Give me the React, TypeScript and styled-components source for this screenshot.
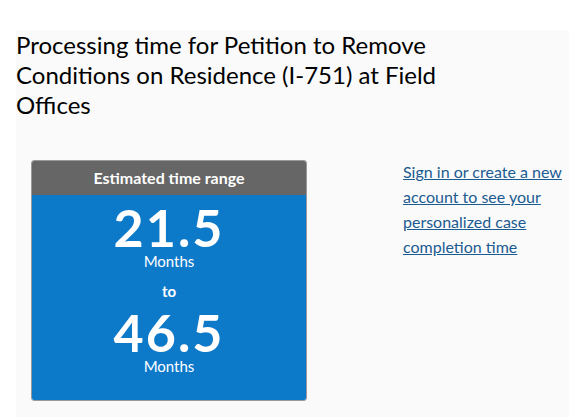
import styled, { createGlobalStyle } from "styled-components";

const GlobalStyle = createGlobalStyle`
  body {
    margin: 0;
    background: #fff;
    font-family: "Lato", "Liberation Sans", sans-serif;
  }
`;

export default function App(): JSX.Element {
    return (
        <>
            <GlobalStyle />
            <Panel>
                <Title>Processing time for Petition to Remove Conditions on Residence (I-751) at Field Offices</Title>
                <Row>
                    <Card>
                        <CardHeader>Estimated time range</CardHeader>
                        <CardBody>
                            <Big>21.5</Big>
                            <Unit>Months</Unit>
                            <To>to</To>
                            <Big $gap={10}>46.5</Big>
                            <Unit>Months</Unit>
                        </CardBody>
                    </Card>
                    <SignIn href="#">Sign in or create a new account to see your personalized case completion time</SignIn>
                </Row>
            </Panel>
        </>
    );
}

const Panel = styled.section`
  margin: 30px 0 0 16px;
  background: #fafafa;
  min-height: 387px;
`;

const Title = styled.h1`
  margin: 0;
  width: 470px;
  font-size: 24px;
  line-height: 30px;
  font-weight: 400;
  color: #000;
`;

const Row = styled.div`
  display: flex;
  align-items: flex-start;
  gap: 96px;
  padding: 40px 0 0 15px;
`;

const Card = styled.div`
  width: 274px;
  border: 1px solid #999;
  border-radius: 3px;
  overflow: hidden;
  flex-shrink: 0;
`;

const CardHeader = styled.div`
  height: 34px;
  background: #666;
  color: #fff;
  font-weight: 700;
  font-size: 16px;
  line-height: 34px;
  text-align: center;
`;

const CardBody = styled.div`
  background: #0d79c9;
  color: #fff;
  text-align: center;
  padding-top: 10px;
  height: 205px;
  box-sizing: border-box;
`;

const Big = styled.div<{ $gap?: number }>`
  margin-top: ${(p) => p.$gap ?? 0}px;
  font-size: 52px;
  line-height: 44px;
  font-weight: 700;
  letter-spacing: 2px;
`;

const Unit = styled.div`
  margin-top: 3px;
  font-size: 15px;
  line-height: 18px;
`;

const To = styled.div`
  font-size: 15px;
  line-height: 18px;
  font-weight: 700;
  margin-top: 12px;
`;

const SignIn = styled.a`
  width: 170px;
  margin-top: -1px;
  color: #1a5b92;
  font-size: 16px;
  line-height: 25px;
  text-decoration: underline;
`;
